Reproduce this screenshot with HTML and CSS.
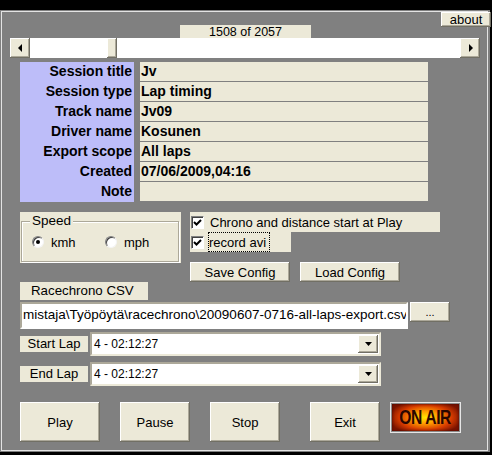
FILE: index.html
```html
<!DOCTYPE html>
<html lang="fi">
<head>
    <meta charset="UTF-8">
    <title>Racechrono player</title>
    <link rel="stylesheet" href="styles.css">
</head>
<body>
    <div class="window">
        <div class="frame">

            <div class="top">
                <button class="btn about">about</button>
            </div>
            <div class="counter">1508 of 2057</div>

            <!-- position slider -->
            <div class="scrollbar">
                <div class="btn arrow">
                    <svg width="5" height="8" viewBox="0 0 5 8"><polygon points="4,0 4,8 0,4" fill="#000"/></svg>
                </div>
                <div class="track-left"></div>
                <div class="btn thumb"></div>
                <div class="track-right"></div>
                <div class="btn arrow">
                    <svg width="5" height="8" viewBox="0 0 5 8"><polygon points="1,0 1,8 5,4" fill="#000"/></svg>
                </div>
            </div>

            <!-- session info -->
            <div class="info">
                <div class="labels">
                    <div>Session title</div>
                    <div>Session type</div>
                    <div>Track name</div>
                    <div>Driver name</div>
                    <div>Export scope</div>
                    <div>Created</div>
                    <div>Note</div>
                </div>
                <div class="values">
                    <div>Jv</div>
                    <div>Lap timing</div>
                    <div>Jv09</div>
                    <div>Kosunen</div>
                    <div>All laps</div>
                    <div>07/06/2009,04:16</div>
                    <div></div>
                </div>
            </div>

            <div class="middle">
                <div class="speed">
                    <div class="group">
                        <span class="legend">Speed</span>
                        <div class="radios">
                            <label class="radio"><span class="dot on"></span>kmh</label>
                            <label class="radio"><span class="dot"></span>mph</label>
                        </div>
                    </div>
                </div>
                <div class="options">
                    <label class="check wide"><span class="box"><svg width="9" height="9" viewBox="0 0 9 9"><path d="M1 4 L3.5 6.5 L8 2" stroke="#000" stroke-width="2" fill="none"/></svg></span>Chrono and distance start at Play</label>
                    <label class="check"><span class="box"><svg width="9" height="9" viewBox="0 0 9 9"><path d="M1 4 L3.5 6.5 L8 2" stroke="#000" stroke-width="2" fill="none"/></svg></span><span class="focus">record avi</span></label>
                    <div class="config">
                        <button class="btn">Save Config</button>
                        <button class="btn">Load Config</button>
                    </div>
                </div>
            </div>

            <div class="csv-label">Racechrono CSV</div>
            <div class="path-row">
                <div class="textbox">mistaja\Työpöytä\racechrono\20090607-0716-all-laps-export.csv</div>
                <button class="btn browse">...</button>
            </div>

            <div class="lap-row">
                <div class="lap-label">Start Lap</div>
                <div class="combo">
                    <span>4 - 02:12:27</span>
                    <div class="btn drop"><svg width="7" height="4" viewBox="0 0 7 4"><polygon points="0,0 7,0 3.5,4" fill="#000"/></svg></div>
                </div>
            </div>
            <div class="lap-row end">
                <div class="lap-label">End Lap</div>
                <div class="combo">
                    <span>4 - 02:12:27</span>
                    <div class="btn drop"><svg width="7" height="4" viewBox="0 0 7 4"><polygon points="0,0 7,0 3.5,4" fill="#000"/></svg></div>
                </div>
            </div>

            <div class="controls">
                <button class="btn big play">Play</button>
                <button class="btn big">Pause</button>
                <button class="btn big">Stop</button>
                <button class="btn big exit">Exit</button>
                <div class="onair"><div class="lamp"><span>ON AIR</span></div></div>
            </div>

        </div>
    </div>
</body>
</html>
```

FILE: styles.css
```css
* {
    box-sizing: border-box;
}

body {
    margin: 0;
    width: 492px;
    height: 455px;
    overflow: hidden;
    background: #000;
    font-family: "Liberation Sans", Arial, sans-serif;
    font-size: 13px;
    color: #000;
}

.window {
    margin-top: 10px;
    width: 490px;
    height: 442px;
    padding: 1px 0 0 1px;
    background: #808080;
}

.frame {
    width: 487px;
    height: 440px;
    border: 1px solid #e4e4e4;
}

/* generic 3d button */
.btn {
    display: flex;
    align-items: center;
    justify-content: center;
    padding: 0;
    border: none;
    background: #ece9d8;
    font-family: inherit;
    font-size: 13px;
    color: #000;
    box-shadow: inset -1px -1px #716f64, inset 1px 1px #fff, inset -2px -2px #aca899;
}

/* top */
.top {
    height: 13px;
    display: flex;
    justify-content: flex-end;
}

.about {
    width: 50px;
    height: 15px;
    margin-right: -4px;
    flex: none;
}

.counter {
    margin-left: 178px;
    width: 131px;
    height: 13px;
    line-height: 14px;
    background: #ece9d8;
    text-align: center;
    font-size: 12.5px;
}

.scrollbar {
    margin-left: 8px;
    width: 470px;
    height: 20px;
    display: flex;
    background: #fff;
}

.scrollbar .arrow {
    width: 20px;
    height: 20px;
}

.track-left {
    width: 77px;
}

.thumb {
    width: 10px;
}

.track-right {
    flex: 1;
}

/* info table */
.info {
    margin: 4px 0 0 18px;
    display: flex;
    gap: 6px;
    font-weight: bold;
    font-size: 14px;
}

.labels {
    width: 114px;
    height: 140px;
    background: #bdbdf9;
    text-align: right;
}

.labels div {
    height: 20px;
    line-height: 19px;
    padding-right: 2px;
}

.values {
    width: 288px;
    display: flex;
    flex-direction: column;
    gap: 1px;
}

.values div {
    height: 19px;
    line-height: 19px;
    padding-left: 1px;
    background: #ece9d8;
}

/* speed + options */
.middle {
    margin: 10px 0 0 18px;
    display: flex;
    align-items: flex-start;
    gap: 9px;
}

.speed {
    width: 161px;
    height: 51px;
    background: #ece9d8;
    padding: 9px 0 0 1px;
}

.group {
    width: 158px;
    height: 41px;
    border: 1px solid #aca899;
    box-shadow: inset 1px 1px #fff, 1px 1px #fff;
}

.legend {
    display: block;
    width: max-content;
    margin: -9px 0 0 8px;
    padding: 0 2px;
    background: #ece9d8;
    height: 16px;
    line-height: 16px;
    font-size: 13.5px;
}

.radios {
    display: flex;
    margin: 5px 0 0 10px;
}

.radio {
    display: flex;
    align-items: center;
    gap: 7px;
    width: 80px;
    height: 16px;
}

.dot {
    width: 12px;
    height: 12px;
    border-radius: 50%;
    background: #fff;
    border: 1px solid;
    border-color: #808080 #f4f4f4 #f4f4f4 #808080;
    box-shadow: inset 1px 1px #404040;
    display: flex;
    align-items: center;
    justify-content: center;
}

.dot.on::after {
    content: "";
    width: 4px;
    height: 4px;
    border-radius: 50%;
    background: #000;
}

.options {
    display: flex;
    flex-direction: column;
    align-items: flex-start;
}

.check {
    display: flex;
    align-items: center;
    height: 20px;
    width: 101px;
    background: #ece9d8;
    padding-left: 1px;
    gap: 6px;
}

.check.wide {
    width: 250px;
}

.box {
    width: 13px;
    height: 13px;
    background: #fff;
    border: 1px solid;
    border-color: #808080 #fff #fff #808080;
    box-shadow: inset 1px 1px #404040;
    display: flex;
    align-items: center;
    justify-content: center;
}

.focus {
    height: 20px;
    line-height: 19px;
    padding: 0 1px 0 0;
    margin-left: -2px;
    border: 1px dotted #000;
    width: 62px;
}

.config {
    margin-top: 10px;
    display: flex;
    gap: 10px;
}

.config .btn {
    width: 100px;
    height: 20px;
}

/* csv file */
.csv-label {
    margin-left: 18px;
    width: 128px;
    height: 18px;
    line-height: 18px;
    padding-left: 11px;
    background: #ece9d8;
    font-size: 13.3px;
}

.path-row {
    margin: 2px 0 0 18px;
    display: flex;
    align-items: flex-start;
    gap: 2px;
}

.textbox {
    width: 388px;
    height: 27px;
    background: #fff;
    border: 2px solid;
    border-color: #aca899 #fff #fff #aca899;
    padding-left: 1px;
    line-height: 22px;
    font-size: 13.5px;
    white-space: nowrap;
    overflow: hidden;
}

.browse {
    width: 40px;
    height: 20px;
    font-size: 11px;
}

/* laps */
.lap-row {
    margin: 3px 0 0 18px;
    display: flex;
    align-items: center;
    gap: 2px;
}

.lap-row.end {
    margin-top: 6px;
}

.lap-label {
    width: 68px;
    height: 16px;
    line-height: 16px;
    background: #ece9d8;
    text-align: center;
}

.combo {
    width: 291px;
    height: 24px;
    background: #fff;
    border: 2px solid;
    border-color: #aca899 #ece9d8 #ece9d8 #aca899;
    display: flex;
    align-items: center;
    justify-content: space-between;
    padding: 0 1px 0 2px;
    font-size: 12px;
}

.drop {
    width: 20px;
    height: 18px;
}

/* bottom */
.controls {
    margin: 16px 0 0 18px;
    display: flex;
    align-items: flex-start;
    gap: 20px;
}

.big {
    width: 70px;
    height: 40px;
}

.big.play {
    width: 80px;
}

.big.exit {
    margin-left: 10px;
}

.onair {
    margin-left: -10px;
    width: 71px;
    height: 31px;
    border: 1px solid #e6e6e6;
    padding: 1px;
    background: #8a8a8a;
}

.lamp {
    height: 100%;
    display: flex;
    align-items: center;
    justify-content: center;
    overflow: hidden;
    background: radial-gradient(ellipse 55% 65% at 50% 50%, #ffe600 0%, #ff9c00 35%, #d83c00 70%, #7c1400 100%);
    box-shadow: inset 0 0 3px #4a0800;
}

.lamp span {
    display: block;
    white-space: nowrap;
    color: #2a0600;
    font-weight: bold;
    font-size: 20px;
    letter-spacing: -0.5px;
    transform: scale(0.78, 1.05);
}
```
